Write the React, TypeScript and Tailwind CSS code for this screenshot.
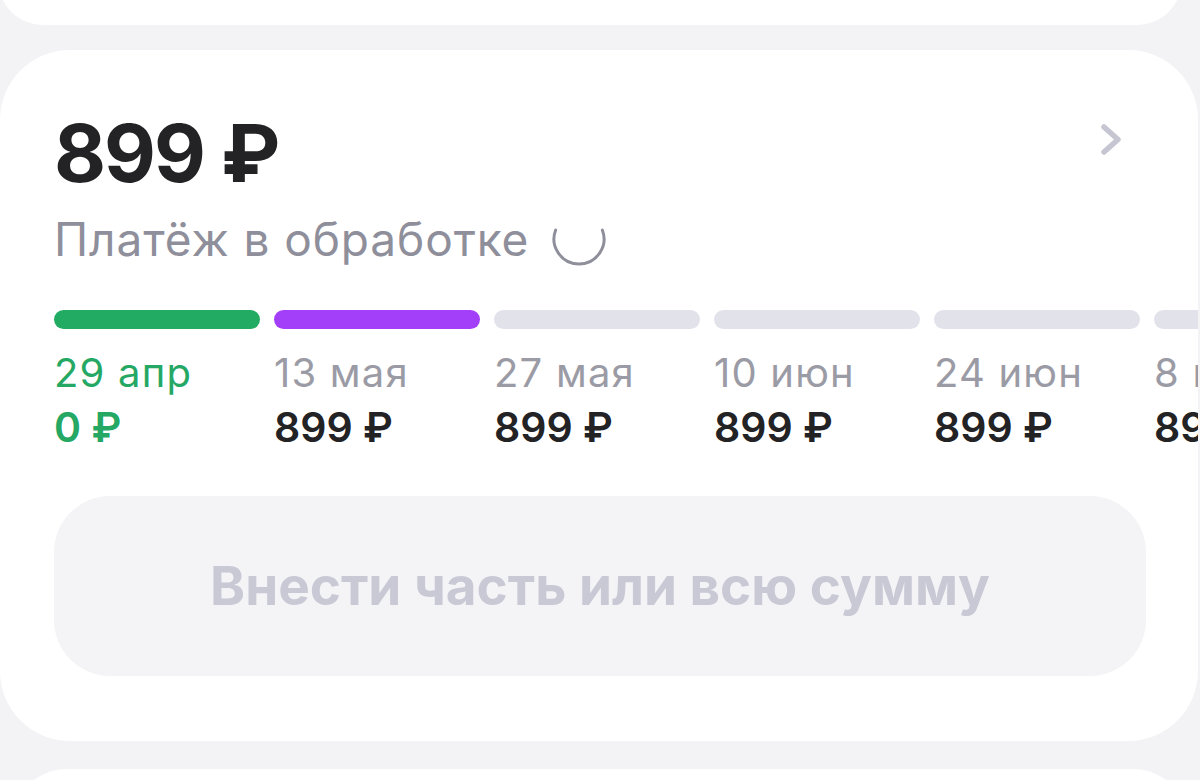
import React from "react";

const segments = [
  { date: "29 апр", amount: "0 ₽", state: "done" },
  { date: "13 мая", amount: "899 ₽", state: "current" },
  { date: "27 мая", amount: "899 ₽", state: "future" },
  { date: "10 июн", amount: "899 ₽", state: "future" },
  { date: "24 июн", amount: "899 ₽", state: "future" },
  { date: "8 июл", amount: "899 ₽", state: "future" },
];

function Chevron() {
  return (
    <svg width="30" height="40" viewBox="0 0 30 40" fill="none" className="mt-[14px] mr-[18px] shrink-0">
      <path d="M6 8 L20 20.5 L6 33" stroke="#c6c6d2" strokeWidth="5.5" strokeLinecap="round" strokeLinejoin="round" />
    </svg>
  );
}

function Spinner() {
  return (
    <svg width="56" height="56" viewBox="0 0 56 56" fill="none" className="shrink-0">
      <path d="M4.66 19.04 A25 25 0 1 0 51.34 19.04" stroke="#8f8f9c" strokeWidth="3" strokeLinecap="round" />
    </svg>
  );
}

export default function App() {
  return (
    <div
      className="h-[780px] overflow-hidden bg-[#f3f3f6] flex flex-col"
      style={{ fontFamily: "Inter, 'Noto Sans', sans-serif" }}
    >
      <div className="h-[100px] -mt-[75px] -ml-[2px] mr-[18px] bg-white rounded-b-[45px] shrink-0" />

      <div className="mt-[25px] mr-[2px] rounded-[70px] bg-white pt-[55px] pl-[54px] pr-[52px] pb-[65px] overflow-hidden shrink-0">
        <div className="flex items-start justify-between">
          <div className="text-[80px] leading-[96px] font-bold text-[#232326] tracking-[-2px]">899 ₽</div>
          <Chevron />
        </div>

        <div className="mt-[10px] flex items-center gap-[22px] h-[56px]">
          <span className="text-[46px] leading-[56px] text-[#8f8f9c] tracking-[0.9px]">Платёж в обработке</span>
          <Spinner />
        </div>

        <div className="mt-[43px] flex gap-[14px]">
          {segments.map((s, i) => (
            <div key={i} className="w-[206px] shrink-0">
              <div
                className={
                  "h-[19px] rounded-full " +
                  (s.state === "done"
                    ? "bg-[#22ab62]"
                    : s.state === "current"
                    ? "bg-[#a43ff9]"
                    : "bg-[#e2e2eb]")
                }
              />
              <div
                className={
                  "mt-[20px] text-[40px] leading-[48px] whitespace-nowrap tracking-[1.2px] " +
                  (s.state === "done" ? "text-[#25a864]" : "text-[#9b9ba6]")
                }
              >
                {s.date}
              </div>
              <div
                className={
                  "mt-[5px] text-[41px] leading-[50px] font-semibold whitespace-nowrap " +
                  (s.state === "done" ? "text-[#25a864]" : "text-[#232326]")
                }
              >
                {s.amount}
              </div>
            </div>
          ))}
        </div>

        <button className="mt-[44px] w-full h-[180px] rounded-[56px] bg-[#f4f4f7] flex items-center justify-center">
          <span className="text-[53px] font-bold text-[#c9c9d6] leading-none">Внести часть или всю сумму</span>
        </button>
      </div>

      <div className="mt-[28px] mx-[12px] h-[100px] rounded-t-[55px] bg-white shrink-0" />
    </div>
  );
}
